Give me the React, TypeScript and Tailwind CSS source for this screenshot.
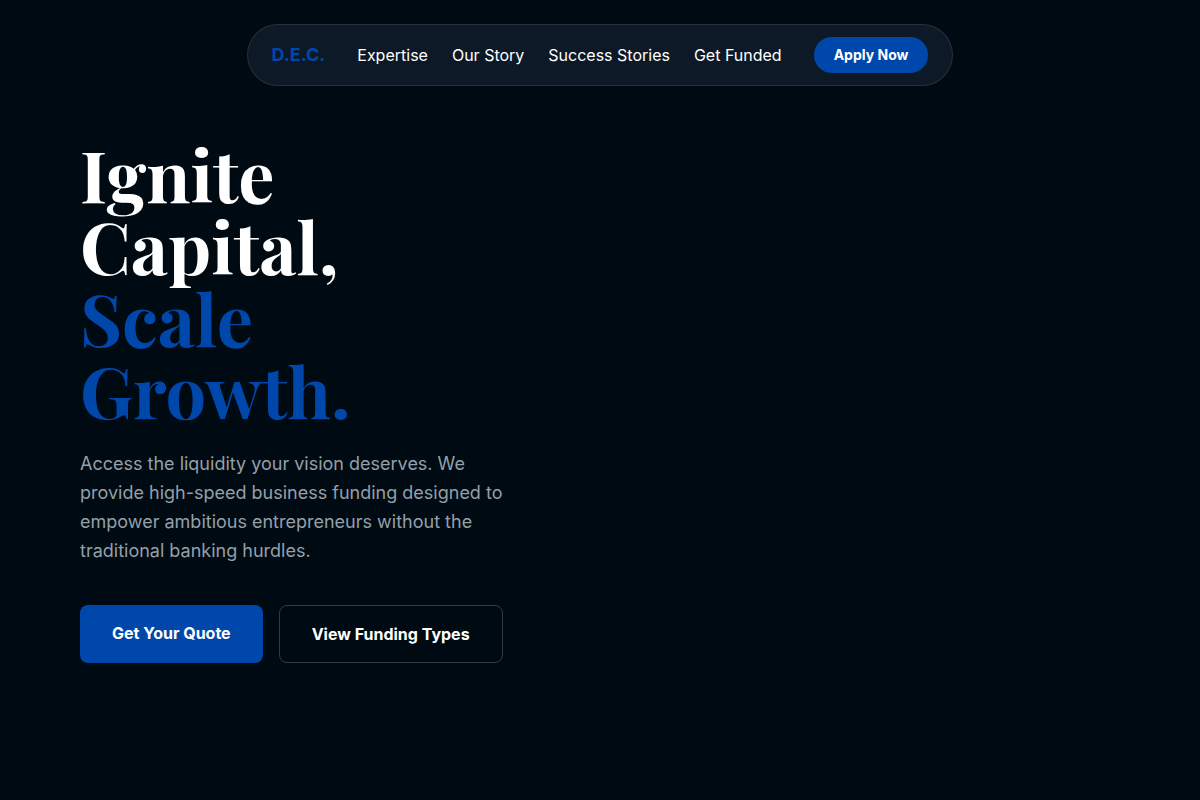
import { cva } from "class-variance-authority";

const links = [
  { label: "Expertise", href: "#expertise" },
  { label: "Our Story", href: "#story" },
  { label: "Success Stories", href: "#success" },
  { label: "Get Funded", href: "#funded" },
];

const buttonVariants = cva("cursor-pointer font-bold text-white transition-colors", {
  variants: {
    variant: {
      pill: "rounded-full bg-[#0047ab] px-5 py-2 text-sm hover:bg-[#0056cf]",
      solid: "rounded-lg bg-[#0047ab] px-8 pt-4 pb-[18px] text-base hover:bg-[#0056cf]",
      outline: "rounded-lg border border-white/20 px-8 py-4 text-base hover:bg-white/5",
    },
  },
  defaultVariants: {
    variant: "solid",
  },
});

interface ButtonProps extends React.ButtonHTMLAttributes<HTMLButtonElement> {
  variant?: "pill" | "solid" | "outline";
}

function Button({ variant = "solid", ...props }: ButtonProps) {
  return <button type="button" className={buttonVariants({ variant })} {...props} />;
}

function Navbar() {
  return (
    <header className="flex justify-center px-4 pt-6">
      <nav className="flex flex-wrap items-center gap-8 rounded-[32px] border border-white/10 bg-[#0d1926] px-6 py-3">
        <a href="#" className="text-lg font-bold text-[#0047ab]">
          D.E.C.
        </a>
        <div className="flex flex-wrap gap-6">
          {links.map((link) => (
            <a key={link.label} href={link.href} className="text-base text-white">
              {link.label}
            </a>
          ))}
        </div>
        <Button variant="pill">Apply Now</Button>
      </nav>
    </header>
  );
}

function Hero() {
  return (
    <main className="px-6 pt-[51px] pb-20 md:px-20">
      <div className="max-w-[440px]">
        <h1 className="mb-6 font-['Playfair_Display','Liberation_Serif',serif] text-7xl leading-[72px] font-bold text-white">
          Ignite Capital,
          <br />
          <span className="text-[#0047ab]">Scale Growth.</span>
        </h1>
        <p className="mb-10 text-lg leading-[29px] text-[#94a0a9]">
          Access the liquidity your vision deserves. We provide high-speed business funding
          designed to empower ambitious entrepreneurs without the traditional banking hurdles.
        </p>
        <div className="flex flex-wrap gap-4">
          <Button>Get Your Quote</Button>
          <Button variant="outline">View Funding Types</Button>
        </div>
      </div>
    </main>
  );
}

export default function App() {
  return (
    <div className="min-h-screen bg-[#000a12] font-['Inter',sans-serif]">
      <Navbar />
      <Hero />
    </div>
  );
}
